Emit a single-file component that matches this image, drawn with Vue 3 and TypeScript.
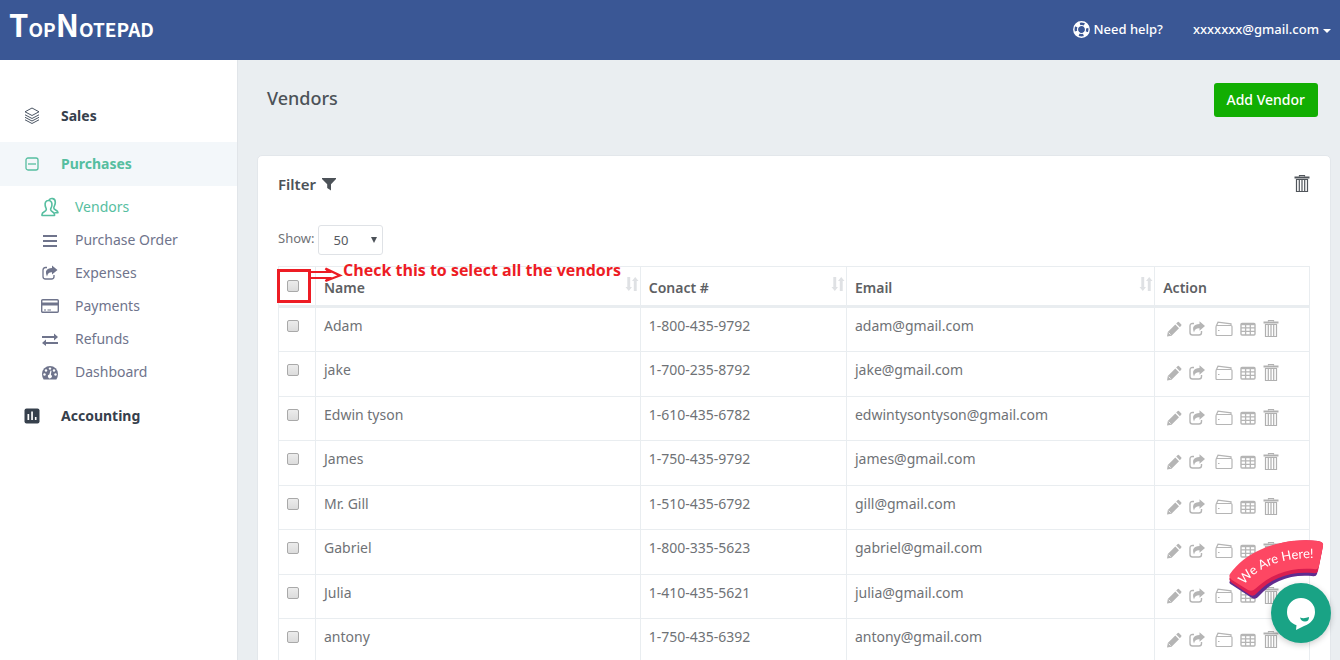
<script setup lang="ts">
import { ref } from 'vue'

interface Vendor {
  name: string
  phone: string
  email: string
}

const vendors: Vendor[] = [
  { name: 'Adam', phone: '1-800-435-9792', email: 'adam@gmail.com' },
  { name: 'jake', phone: '1-700-235-8792', email: 'jake@gmail.com' },
  { name: 'Edwin tyson', phone: '1-610-435-6782', email: 'edwintysontyson@gmail.com' },
  { name: 'James', phone: '1-750-435-9792', email: 'james@gmail.com' },
  { name: 'Mr. Gill', phone: '1-510-435-6792', email: 'gill@gmail.com' },
  { name: 'Gabriel', phone: '1-800-335-5623', email: 'gabriel@gmail.com' },
  { name: 'Julia', phone: '1-410-435-5621', email: 'julia@gmail.com' },
  { name: 'antony', phone: '1-750-435-6392', email: 'antony@gmail.com' },
]

const headings: string[] = ['Name', 'Conact #', 'Email']
const selected = ref<string[]>([])
const pageSize = ref('50')

function toggleAll(event: Event): void {
  const box = event.target as HTMLInputElement
  selected.value = box.checked ? vendors.map((v) => v.name) : []
}
</script>

<template>
  <div class="page">
    <header class="topbar">
      <a href="#" class="logo"><span class="cap">T</span>OP<span class="cap">N</span>OTEPAD</a>
      <div class="topbar-right">
        <a href="#" class="top-link">
          <svg width="17" height="17" viewBox="0 0 17 17" fill="none" stroke="#fff" aria-hidden="true">
            <circle cx="8.500" cy="8.500" r="7.700" stroke-width="1.400" />
            <circle cx="8.500" cy="8.500" r="5.700" stroke-width="4" stroke-dasharray="4.480 4.473" stroke-dashoffset="-2.240" />
            <circle cx="8.500" cy="8.500" r="4" stroke-width="1.200" />
          </svg>
          Need help?
        </a>
        <button type="button" class="top-link account">xxxxxxx@gmail.com<span class="caret"></span></button>
      </div>
    </header>

    <div class="body">
      <nav class="sidebar">
        <a href="#" class="group">
          <svg class="group-icon" width="16" height="18" viewBox="0 0 16 18" fill="none" stroke="#4b5563" stroke-width="1" aria-hidden="true">
            <path d="M8 1L15 4.800L8 8.500L1 4.800ZM1 7.800L8 11.500L15 7.800M1 10.300L8 14L15 10.300M1 12.800L8 16.500L15 12.800" />
          </svg>
          Sales
        </a>
        <a href="#" class="group active">
          <svg class="group-icon" width="16" height="16" viewBox="0 0 16 16" fill="none" stroke="#56bea0" stroke-width="1.300" aria-hidden="true">
            <rect x="2" y="2" width="12" height="12" rx="2" />
            <path d="M4 8H12" />
          </svg>
          Purchases
        </a>
        <ul class="sub">
          <li>
            <a href="#" class="current">
              <svg width="18" height="20" viewBox="0 0 18 20" fill="none" stroke="#56bea0" stroke-width="1.600" stroke-linejoin="round" aria-hidden="true">
                <path d="M7.500 3.500C4.500 3.500 3.800 6 4.200 8.500C4.500 10.500 5.300 11.300 5.300 12.500C5.300 15 1 14.500 1 17.500V18.500H13.500V17.500C13.500 14.500 9.600 15 9.600 12.500C9.600 11.300 10.600 10.500 10.900 8.500C11.200 6 10.500 3.500 7.500 3.500Z" />
                <path d="M8 3.200C9.500 .600 14.500 .800 14.300 5.500C14.200 8.500 12.800 9.300 12.800 11C12.800 13.100 17 12.800 17 15.700H13.500" />
              </svg>
              Vendors
            </a>
          </li>
          <li>
            <a href="#">
              <svg width="18" height="14" viewBox="0 0 18 14" fill="#6f748c" aria-hidden="true">
                <path d="M2 2H16V4H2ZM2 7H16V9H2ZM2 12H16V14H2Z" />
              </svg>
              Purchase Order
            </a>
          </li>
          <li>
            <a href="#">
              <svg width="18" height="16" viewBox="0 0 18 16" fill="#6f748c" aria-hidden="true">
                <path d="M6 2.500H4.500Q2 2.500 2 5V11.500Q2 14 4.500 14H10.500Q13 14 13 11.500V10" fill="none" stroke="#6f748c" stroke-width="1.300" />
                <path d="M11 .500L16.500 5L11 9.500V7.200Q6.800 7 6 11.500Q2.400 3.500 11 3Z" />
              </svg>
              Expenses
            </a>
          </li>
          <li>
            <a href="#">
              <svg width="18" height="14" viewBox="0 0 18 14" aria-hidden="true">
                <rect x=".700" y=".700" width="16.600" height="12.600" rx="1" fill="none" stroke="#6f748c" stroke-width="1.400" />
                <path d="M1 3.500H17V6.500H1ZM3 10.500H5V11.500H3ZM6.500 10.500H10V11.500H6.500Z" fill="#6f748c" />
              </svg>
              Payments
            </a>
          </li>
          <li>
            <a href="#">
              <svg width="18" height="14" viewBox="0 0 18 14" fill="#6f748c" aria-hidden="true">
                <path d="M1 4H13V1.500L17 5L13 8.500V6H1ZM17 10H5V7.500L1 11L5 14V12H17Z" />
              </svg>
              Refunds
            </a>
          </li>
          <li>
            <a href="#">
              <svg width="18" height="18" viewBox="0 0 18 18" aria-hidden="true">
                <path d="M9 3A8 8 0 0 0 1 11Q1 14 2.600 16.500H15.400Q17 14 17 11A8 8 0 0 0 9 3Z" fill="#6f748c" />
                <g fill="#fff">
                  <circle cx="3.500" cy="11.500" r="1.200" /><circle cx="5" cy="7.500" r="1.200" /><circle cx="9" cy="5.600" r="1.200" />
                  <circle cx="13" cy="7.500" r="1.200" /><circle cx="14.500" cy="11.500" r="1.200" />
                  <path d="M9.500 7.500L10.500 7.800L9.900 11.800A1.900 1.900 0 1 1 8.300 11.600Z" />
                </g>
              </svg>
              Dashboard
            </a>
          </li>
        </ul>
        <a href="#" class="group">
          <svg class="group-icon" width="16" height="16" viewBox="0 0 16 16" aria-hidden="true">
            <rect x=".500" y=".500" width="15" height="15" rx="2" fill="#36404c" />
            <path d="M3.500 6H5.200V12H3.500ZM7.200 3.500H8.900V12H7.200ZM10.900 9H12.500V12H10.900Z" fill="#fff" />
          </svg>
          Accounting
        </a>
      </nav>

      <main class="main">
        <div class="title-row">
          <h1>Vendors</h1>
          <button type="button" class="add">Add Vendor</button>
        </div>

        <section class="card">
          <div class="card-head">
            <button type="button" class="filter">
              Filter
              <svg width="14" height="14" viewBox="0 0 14 14" aria-hidden="true">
                <path d="M0 1H14V2L9 7.200V13.500L5.200 11V7.200L0 2Z" fill="#4c5258" />
              </svg>
            </button>
            <button type="button" class="icon-btn" aria-label="Delete selected">
              <svg width="16" height="18" viewBox="0 0 16 18" fill="none" stroke="#50555b" aria-hidden="true">
                <path d="M5.500 1.500V.500H10.500V1.500" stroke-width="1.200" />
                <path d="M.500 2.500H15.500" stroke-width="2" />
                <path d="M2.500 4.500H13.500V16.500H2.500ZM5.300 5V16M8 5V16M10.700 5V16" stroke-width="1.200" />
              </svg>
            </button>
          </div>

          <div class="show">
            <label for="page-size">Show:</label>
            <span class="select-wrap">
              <select id="page-size" v-model="pageSize">
                <option>50</option>
                <option>100</option>
              </select>
            </span>
          </div>

          <div class="table-wrap">
            <table>
              <colgroup>
                <col class="c-check" />
                <col class="c-name" />
                <col class="c-phone" />
                <col class="c-email" />
                <col />
              </colgroup>
              <thead>
                <tr>
                  <th class="check"><input type="checkbox" aria-label="Select all vendors" @change="toggleAll" /></th>
                  <th v-for="h in headings" :key="h">
                    <span class="th-inner">
                      {{ h }}
                      <svg width="14" height="16" viewBox="0 0 14 16" fill="#dfe1e4" aria-hidden="true">
                        <path d="M2.300 1H5.200V11H7L3.800 15L.500 11H2.300ZM8.800 15H11.700V5H13.500L10.200 1L7 5H8.800Z" />
                      </svg>
                    </span>
                  </th>
                  <th>Action</th>
                </tr>
              </thead>
              <tbody>
                <tr v-for="v in vendors" :key="v.name">
                  <td class="check"><input v-model="selected" type="checkbox" :value="v.name" :aria-label="`Select ${v.name}`" /></td>
                  <td>{{ v.name }}</td>
                  <td>{{ v.phone }}</td>
                  <td>{{ v.email }}</td>
                  <td class="actions-cell">
                    <div class="actions">
                      <button type="button" aria-label="Edit">
                        <svg width="16" height="16" viewBox="0 0 16 16" fill="#b5b5b5">
                          <path d="M1 15.500L1.800 11L9.300 3.500L13 7.200L5.500 14.700ZM10.200 2.600L11.800 1Q12.300 .600 12.900 1L15.300 3.400Q15.800 4 15.300 4.600L13.900 6.300Z" />
                          <path d="M2.700 11.700L4.600 13.600" stroke="#fff" stroke-width=".800" />
                        </svg>
                      </button>
                      <button type="button" class="after-share" aria-label="Share">
                        <svg width="16" height="16" viewBox="0 0 16 16" fill="#b5b5b5">
                          <path d="M5 2.500H3.500Q1 2.500 1 5V11.500Q1 14 3.500 14H10Q12.500 14 12.500 11.500V10" fill="none" stroke="#b5b5b5" stroke-width="1.400" />
                          <path d="M10.500 .300L16 5L10.500 9.700V7.300Q6 7 5 11.500Q1.600 3.500 10.500 3Z" />
                        </svg>
                      </button>
                      <button type="button" aria-label="Wallet">
                        <svg width="18" height="16" viewBox="0 0 18 16" fill="none" stroke="#b5b5b5" stroke-width="1.200">
                          <path d="M1 5.500Q1 4.500 2 4.500H16Q17 4.500 17 5.500V13.500Q17 14.500 16 14.500H2Q1 14.500 1 13.500ZM1 5.500L3 1.200L16 2.800V4.500M3 9.500H4.500" />
                        </svg>
                      </button>
                      <button type="button" aria-label="Statement">
                        <svg width="16" height="14" viewBox="0 0 16 14" fill="none" stroke="#b5b5b5">
                          <rect x="1" y="1.500" width="14" height="11.500" rx="1" stroke-width="1.400" />
                          <path d="M1 2.200H15" stroke-width="2" />
                          <path d="M1 5.800H15M1 9.400H15M5.600 2V13M10.300 2V13" stroke-width="1.300" />
                        </svg>
                      </button>
                      <button type="button" aria-label="Delete">
                        <svg width="16" height="18" viewBox="0 0 16 18" fill="none" stroke="#b0b0b0">
                          <path d="M5.500 1.500V.500H10.500V1.500" stroke-width="1.200" />
                          <path d="M.500 2.500H15.500" stroke-width="2" />
                          <path d="M2.500 4.500H13.500V16.500H2.500ZM5.300 5V16M8 5V16M10.700 5V16" stroke-width="1.200" />
                        </svg>
                      </button>
                    </div>
                  </td>
                </tr>
              </tbody>
            </table>
            <div class="callout">
              <span class="callout-box"></span>
              <svg class="callout-arrow" width="32" height="16" viewBox="0 0 32 16" fill="none" stroke="#ed1c24" stroke-width="2.200" aria-hidden="true">
                <path d="M0 5H18L14.500 1.500L29 8.500L14.500 14L18 11H0" />
              </svg>
              <span class="callout-text">Check this to select all the vendors</span>
            </div>
          </div>
        </section>
      </main>
    </div>

    <div class="chat">
      <svg class="banner" width="100" height="66" viewBox="0 0 100 66" role="img" aria-label="We Are Here!">
        <path d="M4 44C20 20 55 3 92 8Q97 9 96 13L91 37Q90 40 86 39C64 37 46 44 33 59Q30 63 26 61L6 48Q2 46 4 44Z" fill="#5f2c90" />
        <path d="M4 40C20 15 55 0 92 4Q98 5 97 9L92 34Q91 37 87 36C64 34 45 41 31 56Q28 60 24 58L6 46Q2 43 4 40Z" fill="#d91f50" />
        <path d="M4 37C20 14 55 0 92 4Q98 5 97 9L93 29Q92 33 88 32C64 30 45 37 29 52Q26 55 22 53L6 43Q2 40 4 37Z" fill="#fd4763" />
        <path id="banner-curve" d="M18 48Q40 19 96 21" fill="none" />
        <text class="banner-text"><textPath href="#banner-curve">We Are Here!</textPath></text>
      </svg>
      <button type="button" class="chat-btn" aria-label="Open chat">
        <svg width="30" height="34" viewBox="0 0 30 34">
          <path d="M15 2A14 14 0 0 1 29 16C29 22.500 25 27.500 18 30L10 34L10.500 29.300C4 27 1 22 1 16A14 14 0 0 1 15 2Z" fill="#fff" />
          <path d="M14 21.500Q18 23 23 21Q23 25.500 19 25.500Q15 25.500 14 21.500Z" fill="#19a385" />
        </svg>
      </button>
    </div>
  </div>
</template>

<style>
body {
  background: #eaeef1;
}
html {
  scrollbar-width: none;
}
</style>

<style scoped>
* {
  box-sizing: border-box;
}
.page {
  min-height: 100vh;
  display: flex;
  flex-direction: column;
  font: 14px/20px "Noto Sans", "Open Sans", sans-serif;
  color: #6f7276;
}
a {
  color: inherit;
  text-decoration: none;
}
button {
  font: inherit;
  color: inherit;
  border: 0;
  padding: 0;
  background: none;
  cursor: pointer;
}
svg {
  display: block;
  flex: none;
}
.topbar {
  height: 60px;
  flex: none;
  display: flex;
  align-items: center;
  justify-content: space-between;
  padding: 0 9px;
  background: #3a5795;
  color: #fff;
}
.logo {
  font: bold 19px/32px "Noto Sans CJK SC", "Liberation Sans", sans-serif;
  padding-bottom: 8px;
}
.logo .cap {
  font-size: 31px;
}
.topbar-right {
  display: flex;
  gap: 30px;
  padding-bottom: 2px;
}
.top-link {
  display: flex;
  align-items: center;
  gap: 3px;
  font-size: 13px;
  font-weight: 500;
}
.caret {
  margin-left: 1px;
  margin-top: 3px;
  border: 4px solid transparent;
  border-top-color: #fff;
  border-bottom: 0;
}
.body {
  flex: 1;
  display: flex;
}
.sidebar {
  width: 238px;
  flex: none;
  padding-top: 34px;
  background: #fff;
  border-right: 1px solid #e1e5e9;
}
.group {
  display: flex;
  align-items: center;
  height: 44px;
  padding-left: 24px;
  gap: 21px;
  font-weight: 700;
  color: #36404c;
}
.group.active {
  margin-top: 4px;
  background: #f3f7fa;
  color: #56bea0;
}
.sub {
  list-style: none;
  margin: 0;
  padding: 4px 0 6px;
}
.sub a {
  display: flex;
  align-items: center;
  height: 33px;
  padding-left: 41px;
  gap: 16px;
  color: #6f748c;
}
.sub a.current {
  color: #56bea0;
}
.main {
  flex: 1;
  min-width: 0;
  padding: 0 9px 20px 19px;
}
.title-row {
  display: flex;
  align-items: flex-start;
  justify-content: space-between;
  height: 95px;
  padding: 23px 13px 0 10px;
}
h1 {
  margin: 0;
  font-size: 18px;
  line-height: 30px;
  font-weight: 500;
  color: #4c5258;
}
.add {
  height: 34px;
  padding: 0 13px;
  border-radius: 3px;
  background: #12ae02;
  color: #fff;
  font-weight: 500;
}
.card {
  padding: 18px 20px 20px;
  background: #fff;
  border: 1px solid #e3e7eb;
  border-radius: 5px;
}
.card-head {
  display: flex;
  align-items: center;
  justify-content: space-between;
}
.filter {
  display: flex;
  align-items: center;
  gap: 6px;
  font-size: 15px;
  font-weight: 600;
  color: #4c5258;
}
.show {
  display: flex;
  align-items: center;
  gap: 4px;
  height: 30px;
  margin: 31px 0 11px;
  font-size: 13px;
}
.show label {
  padding-bottom: 4px;
}
.select-wrap {
  position: relative;
}
.select-wrap::after {
  content: "";
  position: absolute;
  right: 6px;
  top: 12px;
  border: 3px solid transparent;
  border-top: 6px solid #4c5258;
  border-bottom: 0;
  pointer-events: none;
}
select {
  display: block;
  appearance: none;
  width: 65px;
  height: 30px;
  padding: 0 14px;
  border: 1px solid #dfe2e6;
  border-radius: 3px;
  background: #fff;
  color: #55595e;
  font: 13px/20px "Noto Sans", "Open Sans", sans-serif;
}
.table-wrap {
  position: relative;
}
table {
  width: 100%;
  table-layout: fixed;
  border-collapse: separate;
  border-spacing: 0;
  border: 1px solid #e9edf0;
  border-width: 1px 0 0 1px;
}
.c-check {
  width: 37px;
}
.c-name {
  width: 31.5%;
}
.c-phone {
  width: 20%;
}
.c-email {
  width: 29.9%;
}
th,
td {
  padding: 8px;
  text-align: left;
  vertical-align: top;
  border: 0 solid #e9edf0;
  border-width: 0 1px 1px 0;
}
th {
  height: 41px;
  padding: 11px 8px 0;
  border-bottom-width: 3px;
  font-weight: 600;
  color: #5d6063;
}
td {
  height: 44px;
}
tr:nth-child(even) td {
  height: 45px;
}
.th-inner {
  display: flex;
  justify-content: space-between;
  margin-right: -7px;
}
.th-inner svg {
  margin-top: -2px;
}
.check {
  padding-right: 0;
}
input[type="checkbox"] {
  display: block;
  appearance: none;
  width: 12px;
  height: 12px;
  margin: 4px 0 0;
  border: 1px solid #a9a9a9;
  border-radius: 2px;
  background: linear-gradient(#ececec, #dcdcdc);
}
th input[type="checkbox"] {
  margin-top: 2px;
}
input[type="checkbox"]:checked {
  background: #56bea0;
}
td.actions-cell {
  padding: 12px 0 0 11px;
}
.actions {
  display: flex;
  align-items: center;
  gap: 7px;
}
.actions .after-share {
  margin-right: 3px;
}
.callout {
  position: absolute;
  top: 3px;
  left: -1px;
  display: flex;
  align-items: flex-start;
  color: #ed1c24;
  pointer-events: none;
}
.callout-box {
  width: 34px;
  height: 34px;
  border: 3px solid #ed1c24;
}
.callout-arrow {
  margin-top: -2px;
}
.callout-text {
  margin-top: -9px;
  font: bold 16px/20px "Open Sans", "Noto Sans", sans-serif;
  white-space: nowrap;
}
.chat {
  position: fixed;
  right: 9px;
  bottom: 17px;
  display: flex;
  flex-direction: column;
  align-items: flex-end;
}
.banner {
  margin: 0 5px -20px 0;
}
.banner-text {
  font: 13px Lato, sans-serif;
  fill: #fff;
}
.chat-btn {
  display: flex;
  align-items: center;
  justify-content: center;
  width: 60px;
  height: 60px;
  border-radius: 50%;
  background: #19a385;
  box-shadow: 0 2px 6px rgba(0, 0, 0, 0.2);
}
</style>
